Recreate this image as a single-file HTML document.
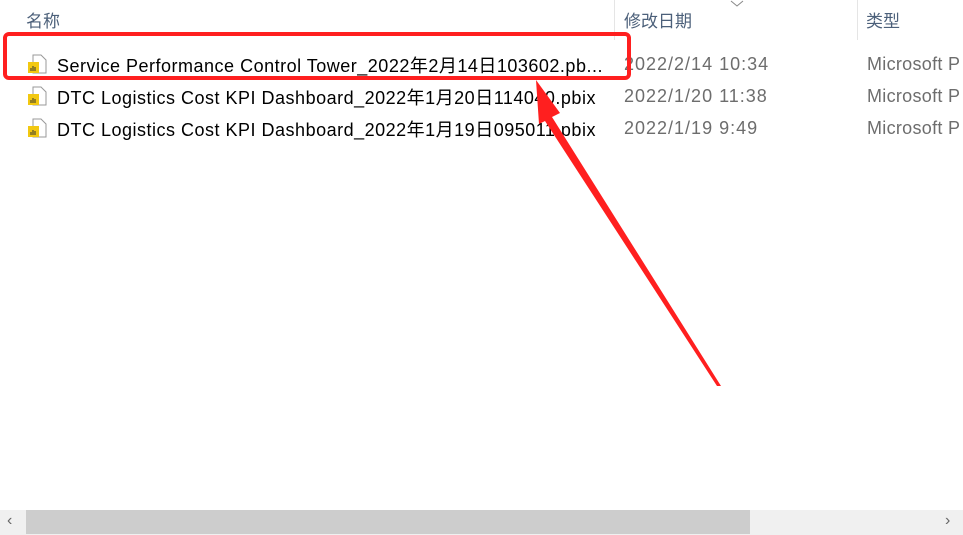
<!DOCTYPE html>
<html><head><meta charset="utf-8"><style>
body{margin:0;width:963px;height:535px;background:#fff;position:relative;overflow:hidden;font-family:"Liberation Sans","Noto Sans CJK SC",sans-serif;}
.t{position:absolute;white-space:nowrap;font-size:18px;}
.h{color:#4c607a;font-size:17px;top:7px}
.g{color:#6d6d6d;letter-spacing:1px}
.m{color:#6d6d6d;letter-spacing:0.3px}
.n{color:#000;letter-spacing:0.5px}
.ic{position:absolute;width:20px;height:20px}
</style></head><body>
<div class="t h" style="left:26px">名称</div>
<div class="t h" style="left:624px">修改日期</div>
<div class="t h" style="left:866px">类型</div>
<div style="position:absolute;left:614px;top:0;width:1px;height:40px;background:#e5e5e5"></div>
<div style="position:absolute;left:857px;top:0;width:1px;height:40px;background:#e5e5e5"></div>
<svg style="position:absolute;left:730px;top:0" width="14" height="8"><path d="M1 1 L7 6 L13 1" fill="none" stroke="#888" stroke-width="1"/></svg>

<svg class="ic" style="left:27px;top:54px"><path d="M6 1H14L19 6V19H6Z" fill="#fff" stroke="#999"/><rect x="1" y="8" width="11" height="11" fill="#f2c811"/><path d="M4 17V14M6 17V12M8 17V13" stroke="#333" stroke-width="1"/></svg>
<svg class="ic" style="left:27px;top:86px"><path d="M6 1H14L19 6V19H6Z" fill="#fff" stroke="#999"/><rect x="1" y="8" width="11" height="11" fill="#f2c811"/><path d="M4 17V14M6 17V12M8 17V13" stroke="#333" stroke-width="1"/></svg>
<svg class="ic" style="left:27px;top:118px"><path d="M6 1H14L19 6V19H6Z" fill="#fff" stroke="#999"/><rect x="1" y="8" width="11" height="11" fill="#f2c811"/><path d="M4 17V14M6 17V12M8 17V13" stroke="#333" stroke-width="1"/></svg>

<div class="t n" style="left:57px;top:52px">Service Performance Control Tower_2022年2月14日103602.pb...</div>
<div class="t n" style="left:57px;top:84px">DTC Logistics Cost KPI Dashboard_2022年1月20日114040.pbix</div>
<div class="t n" style="left:57px;top:116px">DTC Logistics Cost KPI Dashboard_2022年1月19日095011.pbix</div>
<div class="t g" style="left:624px;top:54px">2022/2/14 10:34</div>
<div class="t g" style="left:624px;top:86px">2022/1/20 11:38</div>
<div class="t g" style="left:624px;top:118px">2022/1/19 9:49</div>
<div class="t m" style="left:867px;top:54px">Microsoft P</div>
<div class="t m" style="left:867px;top:86px">Microsoft P</div>
<div class="t m" style="left:867px;top:118px">Microsoft P</div>

<div style="position:absolute;left:3px;top:32px;width:620px;height:40px;border:4px solid #ff1f1f;border-radius:6px"></div>
<svg style="position:absolute;left:0;top:0" width="963" height="535"><polygon points="536,80 560,113 552,117 721,386 717,386 545,121 539,124" fill="#ff1f1f"/></svg>

<div style="position:absolute;left:0;top:510px;width:963px;height:25px;background:#f0f0f0"></div>
<div style="position:absolute;left:26px;top:510px;width:724px;height:24px;background:#cdcdcd"></div>
<div style="position:absolute;left:7px;top:512px;color:#666;font-size:16px">‹</div>
<div style="position:absolute;left:945px;top:512px;color:#666;font-size:16px">›</div>
</body></html>
